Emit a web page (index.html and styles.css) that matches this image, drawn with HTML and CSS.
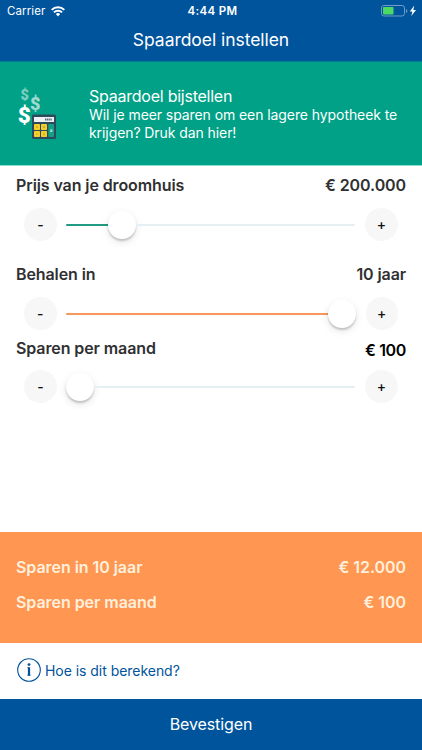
FILE: index.html
```html
<!DOCTYPE html>
<html lang="nl">
<head>
<meta charset="utf-8">
<meta name="viewport" content="width=device-width, initial-scale=1">
<title>Spaardoel instellen</title>
<link rel="stylesheet" href="styles.css">
</head>
<body>
<div class="app">
  <header class="top">
    <div class="status">
      <div class="carrier"><span>Carrier</span>
        <svg width="14" height="11" viewBox="0 0 14 11" fill="none" stroke="#fff" stroke-width="2"><path d="M.7 3.900a8.900 8.900 0 0 1 12.600 0M2.900 6.400a5.800 5.800 0 0 1 8.200 0"/><path d="M7 10.400 4.800 8.100a3.100 3.100 0 0 1 4.400 0Z" fill="#fff" stroke="none"/></svg>
      </div>
      <time class="clock">4:44 PM</time>
      <svg class="battery" width="37" height="12" viewBox="0 0 37 12"><rect x=".5" y=".5" width="23" height="10.500" rx="2.400" fill="none" stroke="#6f9bc9"/><rect x="2" y="2" width="10.500" height="7.500" rx=".8" fill="#4cd964"/><path d="M25 4v4q1.400-.6 1.400-2T25 4Z" fill="#6f9bc9"/><path d="m33.300.5-4.500 5.900h2.600L30.300 11l4.700-6h-2.700Z" fill="#fff"/></svg>
    </div>
    <h1 class="title">Spaardoel instellen</h1>
  </header>

  <section class="tip">
    <svg class="tip-icon" width="40" height="56" viewBox="0 0 40 56">
      <g class="dollars"><text x="2.500" y="14.500" font-size="14.500" opacity=".48">$</text><text x="12" y="24.500" font-size="18" opacity=".62">$</text><text x="-.3" y="38.300" font-size="22.500">$</text></g>
      <rect x="14" y="29.500" width="24" height="24.500" rx="1.500" fill="#2b4a5b"/>
      <rect x="16" y="32" width="20" height="5" fill="#edf0f2"/>
      <path d="M27 34.500h7" stroke="#526875" stroke-width="2" stroke-dasharray="1.300 .5"/>
      <g fill="#f5ce2d"><rect x="16" y="39" width="6" height="6" rx=".7"/><rect x="23" y="39" width="6" height="6" rx=".7"/><rect x="16" y="46" width="6" height="6" rx=".7"/><rect x="23" y="46" width="6" height="6" rx=".7"/></g>
      <path d="M18 42h2m-1-1v2m6-2 2 2m0-2-2 2M18 49h2m5-.8h2m-2 1.600h2" stroke="#b99b20" stroke-width=".6"/>
      <rect x="30.300" y="39" width="5.700" height="13" rx=".7" fill="#15a086"/>
      <path d="M32 45h2.500m-2.500 1.300h2.500" stroke="#d6f3ea" stroke-width=".9"/>
    </svg>
    <div class="tip-copy">
      <h2>Spaardoel bijstellen</h2>
      <p>Wil je meer sparen om een lagere hypotheek te<br>krijgen? Druk dan hier!</p>
    </div>
  </section>

  <main class="controls">
    <section class="control price">
      <div class="label"><span class="name">Prijs van je droomhuis</span><span class="value">€ 200.000</span></div>
      <div class="slider"><button class="step">-</button><div class="track"><i class="fill"></i><i class="knob"></i><i class="rest"></i></div><button class="step">+</button></div>
    </section>
    <section class="control term">
      <div class="label"><span class="name">Behalen in</span><span class="value">10 jaar</span></div>
      <div class="slider"><button class="step">-</button><div class="track"><i class="fill"></i><i class="knob"></i><i class="rest"></i></div><button class="step">+</button></div>
    </section>
    <section class="control monthly">
      <div class="label"><span class="name">Sparen per maand</span><span class="value">€ 100</span></div>
      <div class="slider"><button class="step">-</button><div class="track"><i class="fill"></i><i class="knob"></i><i class="rest"></i></div><button class="step">+</button></div>
    </section>
  </main>

  <section class="summary">
    <div class="sum-row"><span>Sparen in 10 jaar</span><span>€ 12.000</span></div>
    <div class="sum-row"><span>Sparen per maand</span><span>€ 100</span></div>
  </section>
  <div class="info">
    <svg width="24" height="24" viewBox="0 0 24 24" fill="none" stroke="#00549c"><circle cx="12" cy="12" r="11.300" stroke-width="1.100"/><path d="M10.300 9.700h1.700M10.300 17.200h3.400" stroke-width=".8"/><path d="M12 9.300v8.300" stroke-width="2.200"/><circle cx="12" cy="6.600" r="1.400" fill="#00549c" stroke="none"/></svg>
    <span>Hoe is dit berekend?</span>
  </div>
  <button class="confirm"><span>Bevestigen</span></button>
</div>
</body>
</html>
```
FILE: styles.css
```css
* { box-sizing: border-box; }
body { margin: 0; background: #fff; font-family: Inter, "Liberation Sans", sans-serif; }
button { border: 0; padding: 0; font-family: inherit; }
h1, h2, p { margin: 0; font-weight: 400; }
span, time { white-space: nowrap; }
.app { width: 422px; height: 750px; display: flex; flex-direction: column; overflow: hidden; }

.top { height: 62px; flex: none; background: #00549c; color: #fff; border-bottom: 1px solid #007e94; }
.status { height: 22px; display: grid; grid-template-columns: 1fr auto 1fr; align-items: center; padding: 0 4px 0 7px; font-size: 11.5px; line-height: 22px; }
.carrier { display: flex; align-items: center; gap: 6px; letter-spacing: .1px; }
.clock { font-weight: 600; letter-spacing: .35px; }
.battery { justify-self: end; }
.title { font-size: 17.5px; line-height: 36px; text-align: center; letter-spacing: -.05px; }

.tip { height: 103px; flex: none; display: flex; background: #00a186; color: #fff; }
.tip-icon { margin: 23px 0 0 18px; flex: none; }
.dollars { font-family: Roboto, sans-serif; font-weight: 900; fill: #fff; }
.tip-copy { margin: 24px 0 0 31px; white-space: nowrap; }
.tip h2 { font-size: 16px; line-height: 20px; letter-spacing: -.24px; }
.tip p { font-size: 14px; line-height: 17.5px; letter-spacing: -.08px; }

.controls { height: 367px; flex: none; padding: 8px 16px 0; border-top: 1px solid #88ded2; }
.control { height: 89px; }
.term { height: 74px; }
.label { height: 22px; display: flex; justify-content: space-between; align-items: center; font-size: 16px; font-weight: 600; letter-spacing: -.1px; color: #303032; }
.monthly .value { color: #000; padding-top: 4px; letter-spacing: -.35px; }
.slider { height: 33px; margin: 12px 8px 0; display: flex; align-items: center; }
.monthly .slider { margin-top: 11px; }
.step { width: 33px; height: 33px; border-radius: 50%; background: #f7f7f7; color: #111; font-size: 14px; line-height: 33px; font-weight: 500; }
.track { flex: 1; display: flex; align-items: center; margin: 0 10px 0 9px; height: 28px; }
.fill { height: 2px; border-radius: 1px 0 0 1px; }
.rest { flex: 1; height: 2px; background: #e6eff4; border-radius: 0 1px 1px 0; }
.knob { width: 28px; height: 28px; flex: none; border-radius: 50%; background: #fff; box-shadow: 0 2px 2px rgba(0,0,0,.19), 0 3px 8px rgba(0,0,0,.1); }
.price .fill { width: 42px; background: #219b83; }
.term .fill { width: 262px; background: #f79759; }
.monthly .fill { width: 0; }

.summary { height: 111px; flex: none; padding: 17px 16px 0; background: #ff9651; color: #fff0dc; font-size: 16px; font-weight: 600; letter-spacing: -.05px; }
.sum-row { height: 35px; display: flex; justify-content: space-between; align-items: center; }
.info { height: 56px; flex: none; display: flex; align-items: center; padding: 0 0 2px 17px; gap: 4px; color: #00549c; font-size: 14px; letter-spacing: -.04px; }
.confirm { height: 51px; flex: none; padding-bottom: 2px; background: #00549c; color: #fff; font-size: 16px; letter-spacing: -.1px; }
```
